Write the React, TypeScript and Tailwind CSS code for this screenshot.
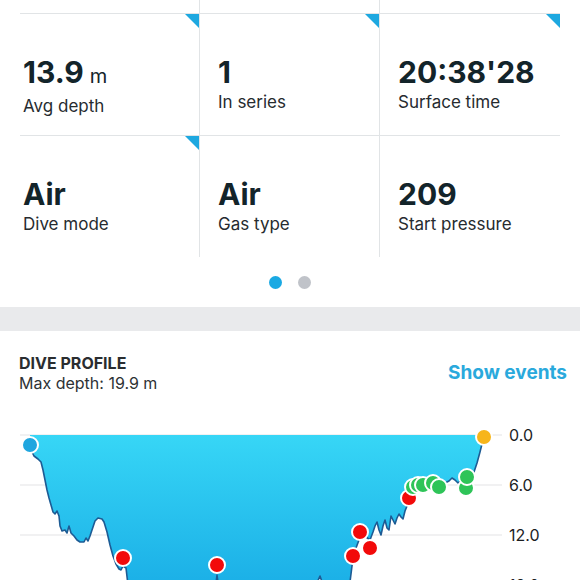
import React from "react";

const font = { fontFamily: "Inter, 'Noto Sans', sans-serif" };

type Stat = { value: string; unit?: string; label: string; flag?: boolean };

const rows: Stat[][] = [
  [
    { value: "13.9", unit: "m", label: "Avg depth", flag: true },
    { value: "1", label: "In series", flag: true },
    { value: "20:38'28", label: "Surface time", flag: true },
  ],
  [
    { value: "Air", label: "Dive mode", flag: true },
    { value: "Air", label: "Gas type" },
    { value: "209", label: "Start pressure" },
  ],
];

// profile points in page coordinates (chart svg starts at y=420)
const pts: [number, number][] = [
  [30, 445], [32, 452], [34, 456], [38, 459], [41, 462], [43, 470], [45, 480], [47, 490],
  [49, 498], [51, 505], [53, 512], [55, 514], [57, 511], [59, 516], [60, 526], [62, 531],
  [65, 530], [67, 533], [69, 526], [71, 533], [74, 536], [77, 540], [80, 542], [84, 542],
  [86, 538], [88, 541], [90, 536], [92, 530], [95, 521], [98, 518], [102, 519], [104, 522],
  [107, 532], [110, 545], [113, 556], [116, 564], [119, 569], [121, 570], [123, 566],
  [126, 568], [128, 585], [135, 600], [160, 610], [190, 605], [215, 592], [217, 575],
  [219, 590], [250, 600], [290, 598], [316, 585], [320, 576], [324, 588], [345, 590],
  [350, 582], [353, 558], [356, 548], [359, 540], [362, 535], [366, 537], [370, 540],
  [373, 532], [375, 526], [377, 522], [379, 530], [381, 535], [383, 526], [385, 520],
  [387, 528], [389, 530], [391, 516], [393, 520], [395, 524], [397, 518], [399, 514],
  [401, 517], [403, 519], [405, 511], [407, 506], [409, 499], [412, 490], [415, 486],
  [422, 485], [428, 484], [433, 483], [439, 486], [445, 483], [449, 481], [452, 478],
  [455, 480], [458, 483], [461, 481], [465, 478], [470, 476], [474, 472], [477, 463],
  [480, 452], [482, 444], [484, 437],
];

const Y0 = 420;
const line = pts.map(([x, y], i) => `${i ? "L" : "M"}${x},${y - Y0}`).join(" ");
const fill = `M30,${435 - Y0} ` + pts.map(([x, y]) => `L${x},${y - Y0}`).join(" ") + ` L485,${435 - Y0} Z`;

const markers: { x: number; y: number; c: string }[] = [
  { x: 30, y: 445, c: "#1fa6df" },
  { x: 123, y: 558, c: "#f20a0a" },
  { x: 217, y: 565, c: "#f20a0a" },
  { x: 353, y: 556, c: "#f20a0a" },
  { x: 360, y: 532, c: "#f20a0a" },
  { x: 370, y: 548, c: "#f20a0a" },
  { x: 409, y: 498, c: "#f20a0a" },
  { x: 413, y: 487, c: "#2ec458" },
  { x: 418, y: 485, c: "#2ec458" },
  { x: 423, y: 485, c: "#2ec458" },
  { x: 433, y: 483, c: "#2ec458" },
  { x: 439, y: 487, c: "#2ec458" },
  { x: 466, y: 488, c: "#2ec458" },
  { x: 467, y: 477, c: "#2ec458" },
  { x: 484, y: 437, c: "#f7b51a" },
];

function Cell({ s, col, h }: { s?: Stat; col: number; h: string }) {
  return (
    <div
      className={`relative ${h} ${col < 2 ? "border-r border-[#e1e4e6]" : ""} ${
        col === 0 ? "pl-[3px]" : "pl-[18px]"
      }`}
    >
      {s?.flag && (
        <div className="absolute right-0 top-0 h-[14px] w-[14px] bg-[#1ea8e0] [clip-path:polygon(0_0,100%_0,100%_100%)]" />
      )}
      {s && (
        <div className="pt-[40px]">
          <div className="text-[30px] font-bold leading-[36px] text-[#13242a]">
            {s.value}
            {s.unit && <span className="ml-[6px] text-[20px] font-normal">{s.unit}</span>}
          </div>
          <div className="text-[17px] leading-6 text-[#262b2f]">{s.label}</div>
        </div>
      )}
    </div>
  );
}

export default function App() {
  return (
    <div className="h-[580px] w-[580px] overflow-hidden bg-white" style={font}>
      <div className="mx-5 grid grid-cols-3">
        {[0, 1, 2].map((c) => (
          <div key={c} className="border-b border-[#e1e4e6]">
            <Cell col={c} h="h-[13px]" />
          </div>
        ))}
        {rows[0].map((s, c) => (
          <div key={c} className="border-b border-[#e1e4e6]">
            <Cell s={s} col={c} h="h-[121px]" />
          </div>
        ))}
        {rows[1].map((s, c) => (
          <Cell key={c} s={s} col={c} h="h-[121px]" />
        ))}
      </div>

      <div className="flex justify-center gap-[16px] pb-[18px] pt-[19px]">
        <span className="h-[13px] w-[13px] rounded-full bg-[#1aa9e3]" />
        <span className="h-[13px] w-[13px] rounded-full bg-[#c0c3c9]" />
      </div>

      <div className="h-[24px] bg-[#e9eaec]" />

      <div className="flex items-center justify-between pl-[19px] pr-[13px] pt-[22px]">
        <div>
          <div className="text-[16px] font-bold leading-5 text-[#2a2d30]">DIVE PROFILE</div>
          <div className="text-[16px] leading-5 text-[#2e3235]">Max depth: 19.9 m</div>
        </div>
        <div className="text-[19px] font-bold leading-6 text-[#2aa9dc]">Show events</div>
      </div>

      <svg className="mt-[27px] block" width={580} height={180} viewBox="0 0 580 180">
        <defs>
          <linearGradient id="g" x1="0" y1="15" x2="0" y2="170" gradientUnits="userSpaceOnUse">
            <stop offset="0" stopColor="#37d6f6" />
            <stop offset="1" stopColor="#1aaee6" />
          </linearGradient>
        </defs>
        {[0, 1, 2, 3].map((i) => (
          <line key={i} x1={20} x2={502} y1={15 + i * 50} y2={15 + i * 50} stroke="#ececee" strokeWidth={1.5} />
        ))}
        <path d={fill} fill="url(#g)" />
        <path d={line} fill="none" stroke="#1d5b94" strokeWidth={1.6} strokeLinejoin="round" />
        {markers.map((m, i) => (
          <circle key={i} cx={m.x} cy={m.y - Y0} r={8} fill={m.c} stroke="#fff" strokeWidth={2} />
        ))}
        {["0.0", "6.0", "12.0", "18.0"].map((t, i) => (
          <text key={t} x={509} y={21 + i * 50} fontSize={16} fill="#1b1d1f" style={font}>
            {t}
          </text>
        ))}
      </svg>
    </div>
  );
}
